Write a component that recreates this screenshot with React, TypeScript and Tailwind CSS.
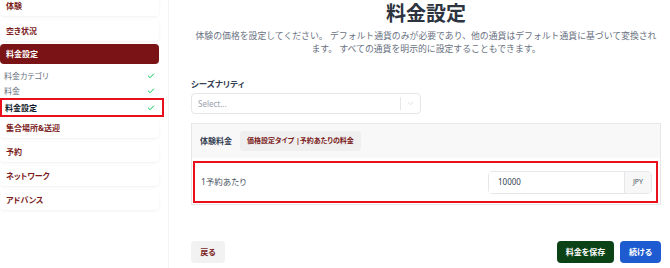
import { Check, ChevronDown } from 'lucide-react';

const font = { fontFamily: '"Noto Sans", "Noto Sans CJK JP", sans-serif', fontFeatureSettings: '"palt"' };

const App = () => {
  const sections = ['集合場所&送迎', '予約', 'ネットワーク', 'アドバンス'];
  const subItems = [
    { label: '料金カテゴリ', active: false },
    { label: '料金', active: false },
    { label: '料金設定', active: true },
  ];

  return (
    <div className="w-[670px] h-[268px] flex overflow-hidden bg-white text-gray-700" style={font}>
      {/* Sidebar */}
      <aside className="w-[169px] shrink-0 border-r border-gray-100 flex flex-col">
        <div className="mr-[9px] mt-[-4px] h-[20px] flex items-center px-[6px] rounded bg-white shadow-[0_1px_3px_rgba(0,0,0,0.06)] text-[8px] font-bold text-[#7c1d1d]">
          体験
        </div>
        <div className="mr-[9px] mt-[4px] h-[21px] flex items-center px-[6px] rounded bg-white shadow-[0_1px_3px_rgba(0,0,0,0.06)] text-[8px] font-bold text-[#7c1d1d]">
          空き状況
        </div>
        <div className="mr-[9px] mt-[3px] h-[20px] flex items-center px-[6px] rounded bg-[#7a1315] text-[8px] font-bold text-white">
          料金設定
        </div>

        {/* Sub items */}
        <div className="mt-[4px] mr-[4px] flex flex-col">
          {subItems.map((item) =>
            item.active ? (
              <div key={item.label} className="h-[19px] flex items-center justify-between pl-[3px] pr-[7px] border-2 border-[#e8101a] text-[8px] font-semibold text-gray-900">
                <span>{item.label}</span>
                <Check className="w-[8px] h-[8px] text-green-500" strokeWidth={3} />
              </div>
            ) : (
              <div key={item.label} className="h-[15px] flex items-center justify-between pl-[4px] pr-[9px] text-[8px] text-gray-500">
                <span>{item.label}</span>
                <Check className="w-[8px] h-[8px] text-green-500" strokeWidth={3} />
              </div>
            )
          )}
        </div>

        <div className="mt-[1px] flex flex-col gap-[4px]">
          {sections.map((s) => (
            <div key={s} className="mr-[9px] h-[20px] flex items-center px-[6px] rounded bg-white shadow-[0_1px_3px_rgba(0,0,0,0.06)] text-[8px] font-bold text-[#7c1d1d]">
              {s}
            </div>
          ))}
        </div>
      </aside>

      {/* Main */}
      <main className="flex-1 pl-[22px] pr-[9px] flex flex-col">
        <h1 className="mt-[1px] text-[20px] leading-[26px] font-bold text-[#2d3440] text-center">料金設定</h1>
        <p className="mt-[3px] px-[3px] text-[8.85px] leading-[13px] text-gray-500 text-center [font-feature-settings:normal]">
          体験の価格を設定してください。 デフォルト通貨のみが必要であり、他の通貨はデフォルト通貨に基づいて変換されます。 すべての通貨を明示的に設定することもできます。
        </p>

        <label className="mt-[22px] text-[8.5px] leading-[12px] font-semibold text-gray-700">シーズナリティ</label>
        <div className="mt-[3px] w-[230px] h-[21px] border border-gray-200 rounded flex items-center">
          <span className="flex-1 pl-[6px] text-[8px] text-gray-400">Select...</span>
          <span className="w-px h-[13px] bg-gray-200" />
          <span className="w-[19px] flex justify-center">
            <ChevronDown className="w-[9px] h-[9px] text-gray-300" />
          </span>
        </div>

        {/* Price panel */}
        <div className="mt-[9px] border border-gray-200 pb-[1px]">
          <div className="h-[34px] bg-[#f8f8f8] flex items-center pl-[8px] gap-[8px]">
            <span className="text-[8px] font-semibold text-gray-700">体験料金</span>
            <span className="h-[20px] px-[7px] flex items-center rounded bg-[#efefef] text-[7px] font-bold text-[#7c1d1d]">
              価格設定タイプ |予約あたりの料金
            </span>
          </div>
          <div className="mt-[3px] ml-[1px] mr-[2px] h-[42px] border-2 border-[#e8101a] flex items-center justify-between pl-[6px] pr-[4px]">
            <span className="text-[8.5px] text-gray-600">1予約あたり</span>
            <div className="flex h-[23px] border border-gray-200 rounded">
              <span className="w-[135px] flex items-center pl-[9px] text-[8px] text-gray-700 bg-white">10000</span>
              <span className="w-[27px] flex items-center justify-center bg-[#f7f7f7] border-l border-gray-200 text-[7px] text-gray-600">
                JPY
              </span>
            </div>
          </div>
        </div>

        {/* Footer buttons */}
        <div className="mt-auto mb-[5px] flex items-center justify-between">
          <button className="h-[22px] w-[34px] rounded bg-[#f2f2f2] text-[8px] font-bold text-[#7c1d1d]">戻る</button>
          <div className="flex gap-[6px]">
            <button className="h-[22px] w-[57px] rounded bg-[#0b4317] text-[8px] font-bold text-white">料金を保存</button>
            <button className="h-[22px] w-[41px] rounded bg-[#1e5bd0] text-[8px] font-bold text-white">続ける</button>
          </div>
        </div>
      </main>
    </div>
  );
};

export default App;
